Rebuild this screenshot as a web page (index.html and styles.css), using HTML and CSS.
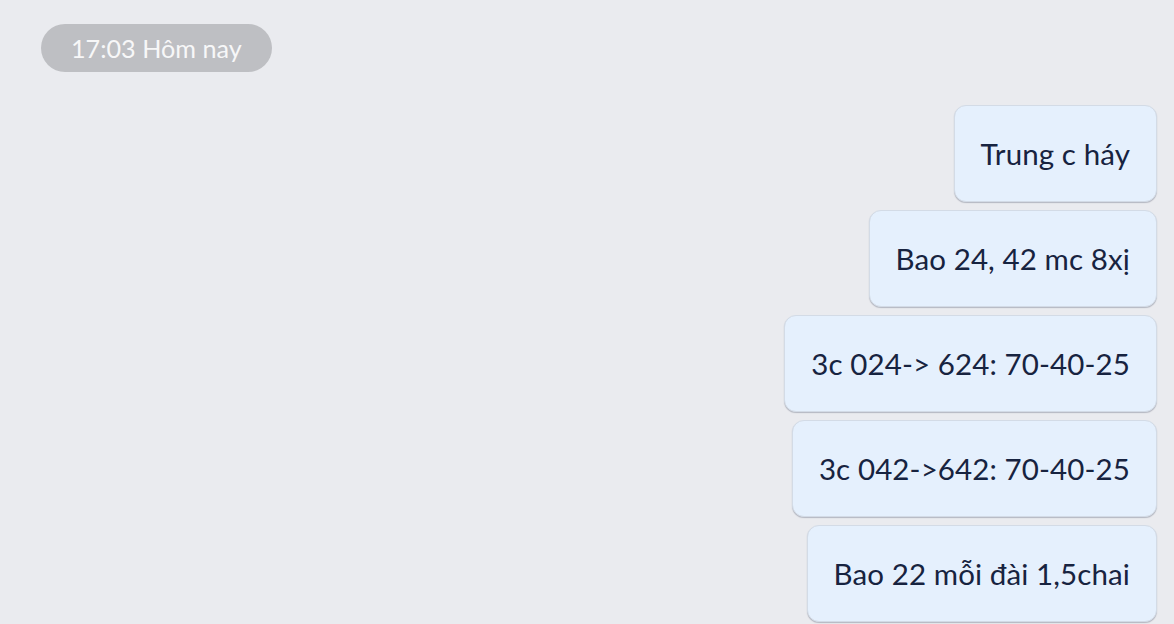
FILE: index.html
```html
<!DOCTYPE html>
<html lang="vi">
<head>
<meta charset="utf-8">
<link rel="stylesheet" href="styles.css">
</head>
<body>
<div class="chat">
  <div class="stamp-row"><span class="stamp">17:03 Hôm nay</span></div>
  <div class="messages">
    <div class="bubble">Trung c háy</div>
    <div class="bubble">Bao 24, 42 mc 8xị</div>
    <div class="bubble">3c 024-&gt; 624: 70-40-25</div>
    <div class="bubble">3c 042-&gt;642: 70-40-25</div>
    <div class="bubble">Bao 22 mỗi đài 1,5chai</div>
  </div>
</div>
</body>
</html>
```
FILE: styles.css
```css
html, body {
  margin: 0;
  padding: 0;
  background: #eaebef;
  height: 100%;
  overflow: hidden;
}
.chat {
  font-family: Lato, "Noto Sans", sans-serif;
  padding: 24px 17px 0 41px;
}
.stamp-row {
  display: flex;
}
.stamp {
  display: inline-flex;
  align-items: center;
  height: 48px;
  padding: 0 30px 1px;
  box-sizing: border-box;
  border-radius: 24px;
  background: #bebfc3;
  color: #f7f7f8;
  font-size: 25.2px;
}
.messages {
  margin-top: 33px;
  display: flex;
  flex-direction: column;
  align-items: flex-end;
  gap: 8px;
}
.bubble {
  box-sizing: border-box;
  height: 97px;
  display: flex;
  align-items: center;
  padding: 0 26px 0 26px;
  background: #e5f0fd;
  border: 1px solid #d3dbe6;
  border-radius: 12px;
  box-shadow: 0 1px 1px rgba(80, 90, 110, 0.35);
  color: #172340;
  font-size: 29.5px;
  letter-spacing: 0.1px;
  white-space: nowrap;
}
```
